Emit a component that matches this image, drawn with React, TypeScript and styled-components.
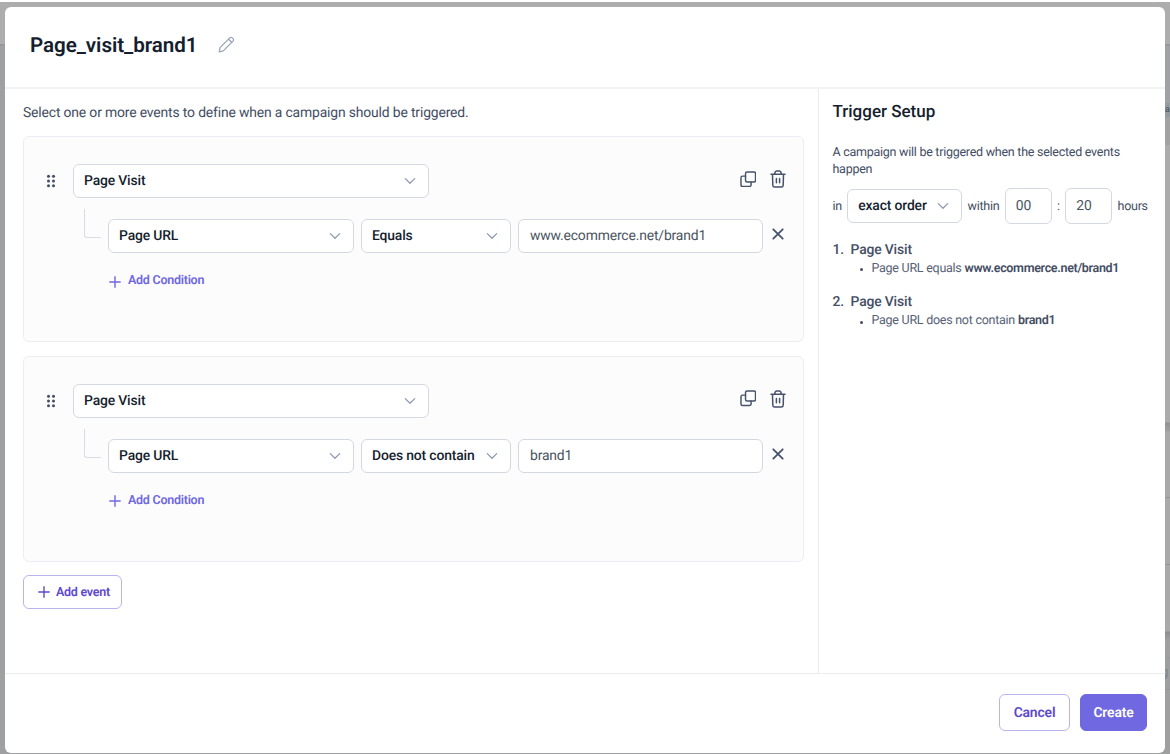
import styled, { createGlobalStyle, css } from "styled-components";

const Colors = {
  Ink: "#151e2e",
  Text: "#434d63",
  Muted: "#566175",
  Line: "#ebecf0",
  Border: "#d5d8e2",
  Card: "#fcfcfc",
  Primary: "#7068e0",
  PrimaryDark: "#5d49cd",
  PrimaryLight: "#b9b3f2",
};

const regularText = css`
  font-size: 13.9px;
  letter-spacing: -0.15px;
`;

const smallText = css`
  font-size: 12.5px;
  letter-spacing: -0.26px;
`;

const GlobalStyle = createGlobalStyle`
  * {
    box-sizing: border-box;
  }
  body {
    margin: 0;
    font-family: Roboto, "Liberation Sans", sans-serif;
    color: ${Colors.Ink};
    text-rendering: geometricPrecision;
  }
  h1, h2, p, ol, ul {
    margin: 0;
    padding: 0;
  }
  button, input {
    font-family: inherit;
    text-rendering: inherit;
  }
`;

const Page = styled.div`
  position: relative;
  height: 754px;
  padding: 7px 5px 1px;
  overflow: hidden;
  background: linear-gradient(#fff 2px, #adadad 2px, #adadad 44px, #97989b 44px, #97989b 46px, #9fa0a2 46px);
`;

const Behind = styled.div`
  position: absolute;
  top: 46px;
  right: 0;
  bottom: 0;
  width: 8px;
  overflow: hidden;
  background: linear-gradient(
    #a0a1a4 57px, #929b9f 57px, #929b9f 71px, #a2a2a3 71px, #a2a2a3 99px,
    #ababab 99px, #ababab 376px, #929294 377px, #a0a0a1 385px,
    #a9a9a9 386px, #a9a9a9 451px, #939496 451px, #939496 452px,
    #a9a9a9 452px, #a9a9a9 518px, #939496 518px, #939496 519px,
    #a9a9a9 519px, #a9a9a9 585px, #8e8e90 586px, #9f9fa0 594px,
    #a0a0a1 611px, #95979a 611px, #95979a 612px, #9c9ea0 612px,
    #9c9ea0 643px, #939598 643px, #939598 644px, #9f9fa0 644px
  );
`;

const Clipped = styled.span<{ $top: number; $left: number; $size: number; $color: string }>`
  position: absolute;
  top: ${(p) => p.$top}px;
  left: ${(p) => p.$left}px;
  font-size: ${(p) => p.$size}px;
  line-height: 14px;
  color: ${(p) => p.$color};
`;

const Modal = styled.div`
  position: relative;
  width: 1160px;
  height: 746px;
  display: flex;
  flex-direction: column;
  background: #fff;
  border-radius: 6px;
  overflow: hidden;
`;

const Header = styled.header`
  display: flex;
  align-items: center;
  gap: 21px;
  height: 82px;
  padding: 0 25px 3px;
  border-bottom: 2px solid #f3f3f5;

  svg {
    margin-bottom: 2px;
  }
`;

const Title = styled.h1`
  font-size: 20.6px;
  font-weight: 600;
  line-height: 28px;
  letter-spacing: -0.06px;
`;

const Body = styled.div`
  display: flex;
  height: 584px;
`;

const Events = styled.main`
  width: 814px;
  padding: 14px 14px 0 18px;
  border-right: 1px solid ${Colors.Line};
`;

const Intro = styled.p`
  ${regularText}
  margin-bottom: 13px;
  line-height: 20px;
  color: ${Colors.Text};
`;

const Card = styled.section`
  height: 206px;
  margin-bottom: 13.5px;
  padding: 27px 17px 0 22px;
  background: ${Colors.Card};
  border: 1px solid #ececf4;
  border-radius: 6px;
`;

const EventRow = styled.div`
  display: flex;
  align-items: center;
  height: 34px;
`;

const ConditionRow = styled.div`
  display: flex;
  align-items: center;
  gap: 7px;
  height: 34px;
  margin-top: 21px;
  padding-left: 38px;
`;

const Elbow = styled.span`
  width: 17px;
  height: 29px;
  margin: -25px 0 0 0;
  border: solid #d9dae3;
  border-width: 0 0 1px 1px;
  border-bottom-left-radius: 3px;
`;

const SelectBox = styled.div<{ $width: number }>`
  ${regularText}
  display: flex;
  align-items: center;
  justify-content: space-between;
  width: ${(p) => p.$width}px;
  height: 34px;
  padding: 0 12.5px 0 10px;
  font-weight: 500;
  color: ${Colors.Ink};
  background: #fff;
  border: 1px solid ${Colors.Border};
  border-radius: 6px;
`;

const Input = styled.input<{ $width: number; $height?: number }>`
  ${regularText}
  width: ${(p) => p.$width}px;
  height: ${(p) => p.$height ?? 34}px;
  padding: 0 0 0 11px;
  color: #4a5561;
  background: #fff;
  border: 1px solid ${Colors.Border};
  border-radius: 6px;
  outline: none;
`;

const TimeInput = styled(Input)`
  padding-left: 10px;
  letter-spacing: 0;
`;

const IconButton = styled.button`
  display: flex;
  padding: 0;
  color: #46526a;
  background: none;
  border: none;
`;

const Actions = styled.div<{ $inset?: number }>`
  display: flex;
  align-items: center;
  gap: 14px;
  margin: -4px ${(p) => p.$inset ?? 0}px 0 auto;
`;

const AddCondition = styled.button`
  ${smallText}
  display: flex;
  align-items: center;
  gap: 7px;
  height: 20px;
  margin: 17.5px 0 0 63px;
  padding: 0;
  font-weight: 600;
  color: ${Colors.Primary};
  background: none;
  border: none;

  svg {
    margin-top: 2px;
  }
`;

const AddEvent = styled.button`
  ${smallText}
  display: flex;
  align-items: center;
  gap: 6px;
  width: 99px;
  height: 34px;
  padding: 0 0 0 14px;
  font-weight: 600;
  color: ${Colors.PrimaryDark};
  background: #fff;
  border: 1px solid ${Colors.PrimaryLight};
  border-radius: 6px;
`;

const Setup = styled.aside`
  flex: 1;
  padding: 11px 0 0 13.5px;
  color: ${Colors.Text};
`;

const SetupTitle = styled.h2`
  margin-bottom: 20px;
  font-size: 17px;
  font-weight: 500;
  line-height: 24px;
  color: ${Colors.Ink};
`;

const SetupText = styled.p`
  ${smallText}
  width: 310px;
  line-height: 17px;
`;

const OrderRow = styled.div`
  ${smallText}
  display: flex;
  align-items: center;
  gap: 5.3px;
  height: 36px;
  margin-top: 10px;
`;

const Colon = styled.span`
  width: 3px;
`;

const Steps = styled.ol`
  margin-top: 15.5px;
  list-style: none;
`;

const Step = styled.li`
  ${regularText}
  display: grid;
  grid-template-columns: 18px 1fr;
  align-content: start;
  height: 52.5px;
  font-weight: 500;
  line-height: 20px;
`;

const StepDetail = styled.p`
  ${smallText}
  grid-column: 2;
  display: flex;
  align-items: center;
  gap: 3px;
  padding-left: 9px;
  font-weight: 400;
  line-height: 17px;
  color: ${Colors.Muted};

  &::before {
    content: "";
    width: 3px;
    height: 3px;
    margin: 3px 6px 0 0;
    background: ${Colors.Text};
    border-radius: 50%;
  }

  b {
    font-weight: 600;
    letter-spacing: -0.32px;
    color: ${Colors.Text};
  }
`;

const Footer = styled.footer`
  display: flex;
  justify-content: flex-end;
  align-items: center;
  gap: 10px;
  flex: 1;
  padding: 0 18px 2px 0;
  border-top: 1px solid ${Colors.Line};
`;

const FooterButton = styled.button<{ $filled?: boolean }>`
  ${regularText}
  width: ${(p) => (p.$filled ? 67 : 71)}px;
  height: 37px;
  padding: 0;
  font-weight: 600;
  color: ${(p) => (p.$filled ? "#fff" : Colors.PrimaryDark)};
  background: ${(p) => (p.$filled ? Colors.Primary : "#fff")};
  border: 1px solid ${(p) => (p.$filled ? Colors.Primary : Colors.PrimaryLight)};
  border-radius: 6px;
`;

const Grip = styled.svg`
  margin-right: 17px;
`;

const stroke = {
  fill: "none",
  stroke: "currentColor",
  strokeLinecap: "round" as const,
  strokeLinejoin: "round" as const,
};

const PencilIcon = () => (
  <svg width="17" height="17" viewBox="0 0 17 17" {...stroke} stroke="#9ba5b7" strokeWidth="1.3">
    <path d="M1.3 15.8 2 11.6 11.8 1.9a1.75 1.75 0 0 1 2.5 0l.7.7a1.75 1.75 0 0 1 0 2.5L5.3 14.9Z" />
    <path d="m10.6 3.2 3.1 3.1" />
  </svg>
);

const Chevron = () => (
  <svg width="12" height="8" viewBox="0 0 12 8" {...stroke} stroke="#8f9bb2" strokeWidth="1.3">
    <path d="m1.3 1.6 4.7 4.7 4.7-4.7" />
  </svg>
);

const CopyIcon = () => (
  <svg width="16.5" height="16.5" viewBox="0 0 17 17" {...stroke} strokeWidth="1.5">
    <rect x="5.7" y="1" width="10.3" height="10.3" rx="1.6" />
    <path d="M5.7 5.3H2.6A1.6 1.6 0 0 0 1 6.9v7.5A1.6 1.6 0 0 0 2.6 16h7.2a1.6 1.6 0 0 0 1.6-1.6v-3.1" />
  </svg>
);

const TrashIcon = () => (
  <svg width="16" height="18" viewBox="0 0 16 18" {...stroke} strokeWidth="1.5">
    <path d="M1 4.2h14M2.5 4.2l.3 11A1.9 1.9 0 0 0 4.7 17h6.6a1.9 1.9 0 0 0 1.9-1.8l.3-11M4.5 4.2l.7-2.1A1.5 1.5 0 0 1 6.6 1h2.8a1.5 1.5 0 0 1 1.4 1.1l.7 2.1" />
    <path d="M6.4 8.5v4.2M9.6 8.5v4.2" />
  </svg>
);

const CloseIcon = () => (
  <svg width="12" height="12" viewBox="0 0 12 12" {...stroke} strokeWidth="1.8">
    <path d="m1.3 1.3 9.4 9.4M10.7 1.3l-9.4 9.4" />
  </svg>
);

const PlusIcon = () => (
  <svg width="12" height="12" viewBox="0 0 12 12" {...stroke} strokeWidth="1.4">
    <path d="M6 .8v10.4M.8 6h10.4" />
  </svg>
);

const GripIcon = () => (
  <Grip width="10" height="14" viewBox="0 0 10 14" fill="#434d63">
    {[2.2, 7, 11.8].map((y) => (
      <g key={y}>
        <circle cx="2.5" cy={y} r="1.5" />
        <circle cx="7.5" cy={y} r="1.5" />
      </g>
    ))}
  </Grip>
);

const Select = ({ label, width }: { label: string; width: number }) => (
  <SelectBox $width={width}>
    {label}
    <Chevron />
  </SelectBox>
);

const events = [
  { operator: "Equals", summary: "equals", value: "www.ecommerce.net/brand1" },
  { operator: "Does not contain", summary: "does not contain", value: "brand1" },
];

const EventCard = ({ operator, value }: { operator: string; value: string }) => (
  <Card>
    <EventRow>
      <GripIcon />
      <Select label="Page Visit" width={356} />
      <Actions>
        <IconButton aria-label="Duplicate">
          <CopyIcon />
        </IconButton>
        <IconButton aria-label="Delete">
          <TrashIcon />
        </IconButton>
      </Actions>
    </EventRow>
    <ConditionRow>
      <Elbow />
      <Select label="Page URL" width={246} />
      <Select label={operator} width={150} />
      <Input $width={245} defaultValue={value} />
      <Actions $inset={2}>
        <IconButton aria-label="Remove">
          <CloseIcon />
        </IconButton>
      </Actions>
    </ConditionRow>
    <AddCondition>
      <PlusIcon />
      Add Condition
    </AddCondition>
  </Card>
);

const App = () => (
  <>
    <GlobalStyle />
    <Page>
      <Behind>
        <Clipped $top={57} $left={3} $size={9} $color="#4c525b">a</Clipped>
        <Clipped $top={620} $left={-1} $size={13} $color="#7d8388">g</Clipped>
      </Behind>
      <Modal>
        <Header>
          <Title>Page_visit_brand1</Title>
          <PencilIcon />
        </Header>
        <Body>
          <Events>
            <Intro>Select one or more events to define when a campaign should be triggered.</Intro>
            {events.map((e) => (
              <EventCard key={e.value} operator={e.operator} value={e.value} />
            ))}
            <AddEvent>
              <PlusIcon />
              Add event
            </AddEvent>
          </Events>
          <Setup>
            <SetupTitle>Trigger Setup</SetupTitle>
            <SetupText>A campaign will be triggered when the selected events happen</SetupText>
            <OrderRow>
              in
              <Select label="exact order" width={115} />
              within
              <TimeInput $width={47} $height={36} defaultValue="00" />
              <Colon>:</Colon>
              <TimeInput $width={47} $height={36} defaultValue="20" />
              hours
            </OrderRow>
            <Steps>
              {events.map((e, i) => (
                <Step key={e.value}>
                  <span>{i + 1}.</span>
                  <span>Page Visit</span>
                  <StepDetail>
                    Page URL {e.summary} <b>{e.value}</b>
                  </StepDetail>
                </Step>
              ))}
            </Steps>
          </Setup>
        </Body>
        <Footer>
          <FooterButton>Cancel</FooterButton>
          <FooterButton $filled>Create</FooterButton>
        </Footer>
      </Modal>
    </Page>
  </>
);

export default App;
